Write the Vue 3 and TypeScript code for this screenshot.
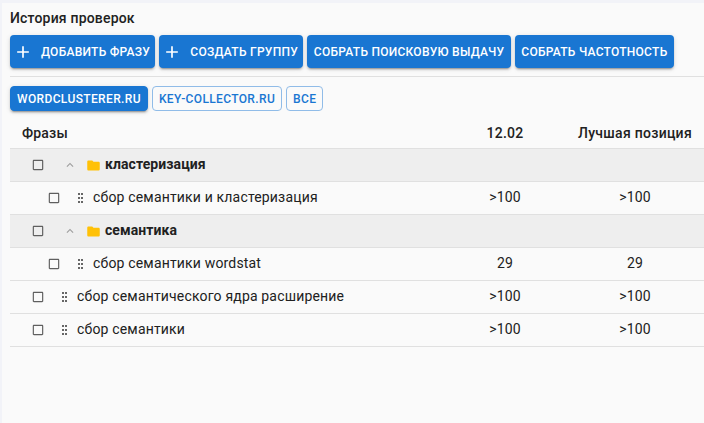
<template>
  <div class="page">
    <div class="panel">
      <div class="title">История проверок</div>

      <div class="actions">
        <button v-for="a in actions" :key="a.label" class="btn" :class="{ 'btn-icon': a.plus }">
          <svg v-if="a.plus" class="plus" width="20" height="20" viewBox="0 0 24 24">
            <path d="M19 13h-6v6h-2v-6H5v-2h6V5h2v6h6v2z" fill="currentColor" />
          </svg>
          {{ a.label }}
        </button>
      </div>

      <div class="divider"></div>

      <div class="chips">
        <button
          v-for="c in chips"
          :key="c"
          class="chip"
          :class="{ active: c === activeChip }"
          @click="activeChip = c"
        >
          {{ c }}
        </button>
      </div>

      <div class="table">
        <div class="row head">
          <div class="head-name">Фразы</div>
          <div class="num">12.02</div>
          <div class="num head-best">Лучшая позиция</div>
        </div>

        <div v-for="r in rows" :key="r.name" class="row" :class="{ group: r.group }">
          <div class="name" :class="{ nested: r.nested }">
            <svg class="check" width="14" height="14" viewBox="0 0 24 24">
              <path
                d="M19 5v14H5V5h14m0-2H5c-1.1 0-2 .9-2 2v14c0 1.1.9 2 2 2h14c1.1 0 2-.9 2-2V5c0-1.1-.9-2-2-2z"
                fill="currentColor"
              />
            </svg>
            <template v-if="r.group">
              <svg class="chevron" width="14" height="14" viewBox="0 0 24 24">
                <path d="M7.41 15.41 12 10.83l4.59 4.58L18 14l-6-6-6 6z" fill="currentColor" />
              </svg>
              <svg class="folder" width="15" height="15" viewBox="0 0 24 24">
                <path
                  d="M10 4H4c-1.1 0-2 .9-2 2v12c0 1.1.9 2 2 2h16c1.1 0 2-.9 2-2V8c0-1.1-.9-2-2-2h-8l-2-2z"
                  fill="currentColor"
                />
              </svg>
            </template>
            <svg v-else class="grip" width="5" height="10" viewBox="0 0 5 10">
              <g fill="currentColor">
                <rect v-for="d in gripDots" :key="d.x + '-' + d.y" :x="d.x" :y="d.y" width="2" height="2" />
              </g>
            </svg>
            <span class="label">{{ r.name }}</span>
          </div>
          <div class="num">{{ r.date }}</div>
          <div class="num">{{ r.best }}</div>
        </div>
      </div>
    </div>
  </div>
</template>

<script setup lang="ts">
import { ref } from 'vue'

interface Row {
  name: string
  group?: boolean
  nested?: boolean
  date?: string
  best?: string
}

const actions = [
  { label: 'Добавить фразу', plus: true },
  { label: 'Создать группу', plus: true },
  { label: 'Собрать поисковую выдачу', plus: false },
  { label: 'Собрать частотность', plus: false }
]

const chips = ['wordclusterer.ru', 'key-collector.ru', 'все']
const activeChip = ref('wordclusterer.ru')

const gripDots = [0, 3].flatMap((x) => [0, 4, 8].map((y) => ({ x, y })))

const rows: Row[] = [
  { name: 'кластеризация', group: true },
  { name: 'сбор семантики и кластеризация', nested: true, date: '>100', best: '>100' },
  { name: 'семантика', group: true },
  { name: 'сбор семантики wordstat', nested: true, date: '29', best: '29' },
  { name: 'сбор семантического ядра расширение', date: '>100', best: '>100' },
  { name: 'сбор семантики', date: '>100', best: '>100' }
]
</script>

<style>
html,
body {
  background: #f2f3f8;
}
</style>

<style scoped>
.page {
  height: 423px;
  overflow: hidden;
  padding: 3px 0 0 2px;
  box-sizing: border-box;
  font-family: Roboto, sans-serif;
  color: #212121;
}

.panel {
  height: 100%;
  background: #fafafa;
  padding: 7px 0 0 8px;
  box-sizing: border-box;
}

.title {
  font-size: 14px;
  font-weight: 500;
  line-height: 17px;
  letter-spacing: 0.19px;
}

.actions {
  display: flex;
  gap: 4px;
  margin-top: 8px;
}

.btn {
  height: 33px;
  padding: 0 6.5px;
  border: 0;
  border-radius: 4px;
  background: #1976d2;
  color: #fff;
  font-family: inherit;
  font-size: 12px;
  font-weight: 500;
  letter-spacing: 0.26px;
  text-transform: uppercase;
  white-space: nowrap;
  display: flex;
  align-items: center;
  box-shadow: 0 3px 1px -2px rgba(0, 0, 0, 0.2), 0 2px 2px 0 rgba(0, 0, 0, 0.14), 0 1px 5px 0 rgba(0, 0, 0, 0.12);
}

.plus {
  margin-right: 8px;
  flex-shrink: 0;
}

.btn-icon {
  padding: 0 5.25px 0 3px;
}

.divider {
  height: 1px;
  background: #e0e0e0;
  margin-top: 8px;
}

.chips {
  display: flex;
  gap: 4px;
  margin-top: 9px;
}

.chip {
  height: 25px;
  padding: 0 6px;
  border: 1px solid #90bce8;
  border-radius: 4px;
  background: transparent;
  color: #1976d2;
  font-family: inherit;
  font-size: 12px;
  font-weight: 500;
  letter-spacing: 0.36px;
  text-transform: uppercase;
  box-sizing: border-box;
}

.chip.active {
  background: #1976d2;
  border-color: #1976d2;
  color: #fff;
  box-shadow: 0 3px 1px -2px rgba(0, 0, 0, 0.2), 0 2px 2px 0 rgba(0, 0, 0, 0.14), 0 1px 5px 0 rgba(0, 0, 0, 0.12);
}

.table {
  margin-top: 5px;
}

.row {
  display: grid;
  grid-template-columns: 1fr 130px 130px;
  padding-right: 4px;
  height: 33px;
  align-items: center;
  border-bottom: 1px solid #e0e0e0;
  box-sizing: border-box;
  font-size: 14px;
  letter-spacing: 0.17px;
  line-height: 16px;
  padding-bottom: 2px;
}

.row.head {
  height: 33px;
  font-weight: 500;
  letter-spacing: 0.28px;
  padding-bottom: 0;
  padding-top: 2px;
}

.head-name {
  padding-left: 12px;
  letter-spacing: 0.17px;
}

.head-best {
  white-space: nowrap;
}

.row.group {
  background: #eeeeee;
  font-weight: 700;
  letter-spacing: 0.08px;
}

.num {
  text-align: center;
}

.name {
  display: flex;
  align-items: center;
  padding-left: 21.25px;
  min-width: 0;
}

.name.nested {
  padding-left: 37.25px;
}

.check {
  color: #5f5f5f;
  flex-shrink: 0;
  margin-top: 2px;
}

.chevron {
  color: #9e9e9e;
  margin-left: 17.25px;
  margin-top: 2px;
}

.folder {
  color: #ffc107;
  margin-left: 9.25px;
  margin-right: 4.25px;
  margin-top: 2px;
}

.grip {
  color: #666;
  margin-left: 16.75px;
  margin-right: 10px;
  margin-top: 2px;
}
</style>
